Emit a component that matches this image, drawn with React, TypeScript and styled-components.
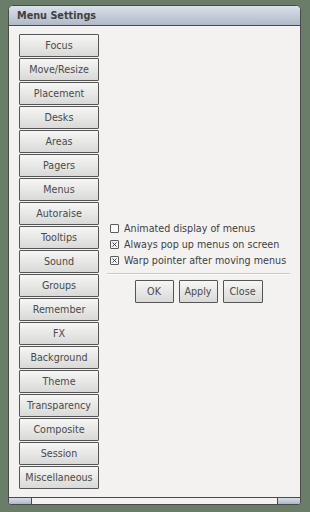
import styled, { createGlobalStyle } from 'styled-components';

const GlobalStyle = createGlobalStyle`
  html, body {
    margin: 0;
    padding: 0;
    background: #6a7d68;
  }
  body {
    font-family: "DejaVu Sans", Verdana, sans-serif;
  }
`;

const Screen = styled.div`
  padding: 5px 0 0 8px;
`;

const Window = styled.div`
  width: 293px;
  height: 500px;
  box-sizing: border-box;
  border: 1px solid #4a4a4a;
  border-radius: 5px 5px 3px 3px;
  overflow: hidden;
  display: flex;
  flex-direction: column;
  background: #f3f2f1;
`;

const TitleBar = styled.div`
  height: 19px;
  flex: none;
  border-bottom: 1px solid #4a4a4a;
  background: linear-gradient(#dae1eb, #b0b9c7);
  display: flex;
  align-items: center;
  padding-left: 8px;
  font-size: 9.7px;
  font-weight: bold;
  color: #404040;
`;

const Body = styled.div`
  flex: 1;
  display: flex;
  align-items: center;
  padding: 8px 0 8px 10px;
`;

const TabColumn = styled.div`
  width: 80px;
  flex: none;
  display: flex;
  flex-direction: column;
  gap: 1px;
`;

const PushButton = styled.button<{ $width?: number }>`
  width: ${p => (p.$width ? `${p.$width}px` : '100%')};
  height: 23px;
  box-sizing: border-box;
  margin: 0;
  padding: 0;
  border: 1px solid #555555;
  border-radius: 1px;
  background: linear-gradient(#f6f6f5, #d9d9d8);
  font-family: "DejaVu Sans", Verdana, sans-serif;
  font-size: 9.6px;
  color: #4a4a4a;
  text-align: center;
`;

const Panel = styled.div`
  flex: 1;
  display: flex;
  flex-direction: column;
  padding: 0 10px 0 8px;
`;

const CheckRow = styled.div`
  height: 16px;
  display: flex;
  align-items: center;
  gap: 5px;
  padding-left: 3px;
  font-size: 9.6px;
  color: #3e3e3e;
`;

const CheckBox = styled.span<{ $checked?: boolean }>`
  width: 9px;
  height: 9px;
  box-sizing: border-box;
  flex: none;
  border: 1px solid #5c5c5c;
  border-radius: 1px;
  background: ${p => (p.$checked ? '#f4f4f4' : '#fbfbfb')};
  display: flex;
  align-items: center;
  justify-content: center;
`;

const Separator = styled.div`
  margin: 4px 0 5px;
  border-top: 1px solid #cacaca;
  border-bottom: 1px solid #fbfbfb;
`;

const ButtonRow = styled.div`
  display: flex;
  justify-content: center;
  gap: 5px;
`;

const HandleBar = styled.div`
  height: 6px;
  flex: none;
  border-top: 1px solid #4a4a4a;
  display: flex;
`;

const Grip = styled.div<{ $side: 'left' | 'right' }>`
  width: 22px;
  background: linear-gradient(#d8dfe9, #aeb7c5);
  ${p => (p.$side === 'left' ? 'border-right: 1px solid #4a4a4a;' : 'border-left: 1px solid #4a4a4a;')}
`;

const HandleMiddle = styled.div`
  flex: 1;
  background: #f3f2f1;
`;

const tabs = [
  'Focus', 'Move/Resize', 'Placement', 'Desks', 'Areas', 'Pagers', 'Menus',
  'Autoraise', 'Tooltips', 'Sound', 'Groups', 'Remember', 'FX', 'Background',
  'Theme', 'Transparency', 'Composite', 'Session', 'Miscellaneous',
];

const options = [
  { label: 'Animated display of menus', checked: false },
  { label: 'Always pop up menus on screen', checked: true },
  { label: 'Warp pointer after moving menus', checked: true },
];

function Cross() {
  return (
    <svg width="5" height="5" viewBox="0 0 5 5">
      <path d="M0.5 0.5L4.5 4.5M4.5 0.5L0.5 4.5" stroke="#404040" strokeWidth="1" />
    </svg>
  );
}

export default function App() {
  return (
    <Screen>
      <GlobalStyle />
      <Window>
        <TitleBar>Menu Settings</TitleBar>
        <Body>
          <TabColumn>
            {tabs.map(t => (
              <PushButton key={t}>{t}</PushButton>
            ))}
          </TabColumn>
          <Panel>
            {options.map(o => (
              <CheckRow key={o.label}>
                <CheckBox $checked={o.checked}>{o.checked && <Cross />}</CheckBox>
                {o.label}
              </CheckRow>
            ))}
            <Separator />
            <ButtonRow>
              <PushButton $width={39}>OK</PushButton>
              <PushButton $width={39}>Apply</PushButton>
              <PushButton $width={40}>Close</PushButton>
            </ButtonRow>
          </Panel>
        </Body>
        <HandleBar>
          <Grip $side="left" />
          <HandleMiddle />
          <Grip $side="right" />
        </HandleBar>
      </Window>
    </Screen>
  );
}
